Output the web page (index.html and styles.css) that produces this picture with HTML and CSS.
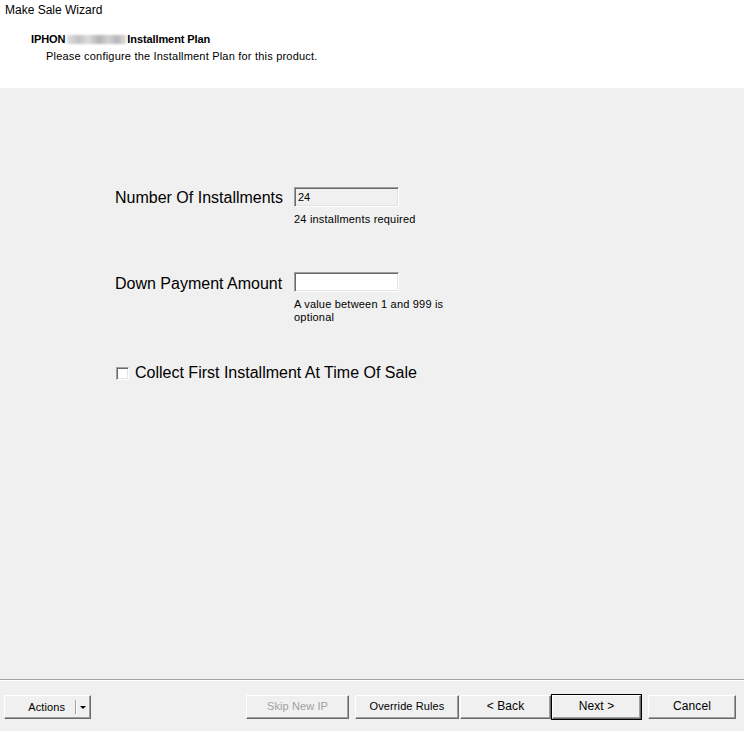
FILE: index.html
```html
<!DOCTYPE html>
<html>
<head>
<meta charset="utf-8">
<link rel="stylesheet" href="styles.css">
</head>
<body>
<div class="window">
  <header class="head">
    <div class="wintitle">Make Sale Wizard</div>
    <div class="step-title"><span>IPHON</span><span class="redacted"></span><span>Installment Plan</span></div>
    <div class="step-desc">Please configure the Installment Plan for this product.</div>
  </header>
  <main class="body">
    <div class="form">
      <div class="row row-installments">
        <div class="label">Number Of Installments</div>
        <div class="field">
          <div class="input disabled">24</div>
          <div class="hint">24 installments required</div>
        </div>
      </div>
      <div class="row row-down">
        <div class="label">Down Payment Amount</div>
        <div class="field">
          <div class="input"></div>
          <div class="hint">A value between 1 and 999 is optional</div>
        </div>
      </div>
      <div class="check-row">
        <span class="checkbox"></span>
        <span class="check-label">Collect First Installment At Time Of Sale</span>
      </div>
    </div>
  </main>
  <footer class="foot">
    <div class="btn btn-actions"><span class="actions-text">Actions</span><span class="split"></span><span class="arrow"></span></div>
    <div class="spacer"></div>
    <div class="btn btn-skip disabled">Skip New IP</div>
    <div class="btn btn-override">Override Rules</div>
    <div class="btn btn-back">&lt; Back</div>
    <div class="btn btn-next">Next &gt;</div>
    <div class="btn btn-cancel">Cancel</div>
  </footer>
</div>
</body>
</html>
```

FILE: styles.css
```css
html, body {
  margin: 0;
  padding: 0;
}
body {
  font-family: "Liberation Sans", Arial, sans-serif;
  color: #000;
  background: #f0f0f0;
}
.window {
  width: 744px;
  height: 731px;
  display: flex;
  flex-direction: column;
  overflow: hidden;
}
.head {
  height: 88px;
  background: #ffffff;
  box-sizing: border-box;
  padding-top: 3px;
}
.wintitle {
  font-size: 12px;
  line-height: 15px;
  padding-left: 5px;
}
.step-title {
  margin-top: 15px;
  padding-left: 31px;
  font-size: 11px;
  font-weight: bold;
  line-height: 13px;
  display: flex;
  align-items: center;
  letter-spacing: -0.1px;
}
.redacted {
  display: inline-block;
  width: 59px;
  height: 9px;
  margin: 0 1px 0 2px;
  background: linear-gradient(90deg, #e0e0e0 0%, #c2c2c2 20%, #dcdcdc 35%, #b4b4b4 55%, #d2d2d2 70%, #b8b8b8 85%, #dcdcdc 100%);
  filter: blur(1px);
}
.step-desc {
  padding-left: 46px;
  font-size: 11px;
  line-height: 13px;
  margin-top: 4px;
  letter-spacing: 0.2px;
}
.body {
  flex: 1;
  background: #f0f0f0;
  box-sizing: border-box;
  padding-top: 99px;
  padding-left: 115px;
}
.form {
  display: flex;
  flex-direction: column;
}
.row {
  display: flex;
  align-items: flex-start;
}
.row-down {
  margin-top: 46px;
}
.label {
  width: 179px;
  font-size: 16px;
  line-height: 18px;
  padding-top: 2px;
}
.row-down .label {
  padding-top: 3px;
}
.field {
  width: 152px;
}
.input {
  width: 105px;
  height: 20px;
  box-sizing: border-box;
  background: #ffffff;
  border-top: 1px solid #a0a0a0;
  border-left: 1px solid #a0a0a0;
  border-right: 1px solid #ffffff;
  border-bottom: 1px solid #ffffff;
  box-shadow: inset 1px 1px 0 #696969, inset -1px -1px 0 #e3e3e3;
  font-size: 11px;
  line-height: 18px;
  padding-left: 3px;
}
.input.disabled {
  background: #f0f0f0;
}
.hint {
  font-size: 11px;
  line-height: 13px;
  margin-top: 6px;
  letter-spacing: 0.2px;
}
.row-down .hint {
  margin-top: 6px;
}
.check-row {
  margin-top: 40px;
  display: flex;
  align-items: center;
  margin-left: 1px;
}
.checkbox {
  width: 13px;
  height: 13px;
  box-sizing: border-box;
  background: #ffffff;
  border-top: 1px solid #a0a0a0;
  border-left: 1px solid #a0a0a0;
  border-right: 1px solid #ffffff;
  border-bottom: 1px solid #ffffff;
  box-shadow: inset 1px 1px 0 #696969, inset -1px -1px 0 #e3e3e3;
}
.check-label {
  margin-left: 6px;
  font-size: 16px;
  line-height: 18px;
}
.foot {
  height: 52px;
  box-sizing: border-box;
  border-top: 1px solid #a0a0a0;
  box-shadow: inset 0 1px 0 #ffffff;
  display: flex;
  align-items: flex-start;
  padding: 15px 8px 0 4px;
}
.spacer {
  flex: 1;
}
.btn {
  height: 24px;
  box-sizing: border-box;
  background: #f0f0f0;
  border-top: 1px solid #ffffff;
  border-left: 1px solid #ffffff;
  border-right: 1px solid #696969;
  border-bottom: 1px solid #696969;
  box-shadow: inset -1px -1px 0 #a0a0a0;
  font-size: 11px;
  line-height: 20px;
  text-align: center;
  letter-spacing: 0.1px;
}
.btn.disabled {
  color: #a0a0a0;
}
.btn-actions {
  width: 87px;
  display: flex;
  align-items: center;
  justify-content: flex-end;
  padding-right: 4px;
}
.actions-text {
  margin-right: 10px;
}
.split {
  width: 1px;
  height: 14px;
  background: #a0a0a0;
  box-shadow: 1px 0 0 #ffffff;
  margin-right: 4px;
}
.arrow {
  width: 0;
  height: 0;
  border-left: 3px solid transparent;
  border-right: 3px solid transparent;
  border-top: 3px solid #000;
}
.btn-skip {
  width: 103px;
}
.btn-override {
  width: 104px;
  margin-left: 6px;
}
.btn-back {
  width: 91px;
  margin-left: 1px;
  font-size: 12px;
}
.btn-next {
  width: 89px;
  margin-left: 1px;
  outline: 1px solid #000;
  outline-offset: 0;
  font-size: 12px;
}
.btn-cancel {
  width: 88px;
  margin-left: 7px;
  font-size: 12px;
}
```
